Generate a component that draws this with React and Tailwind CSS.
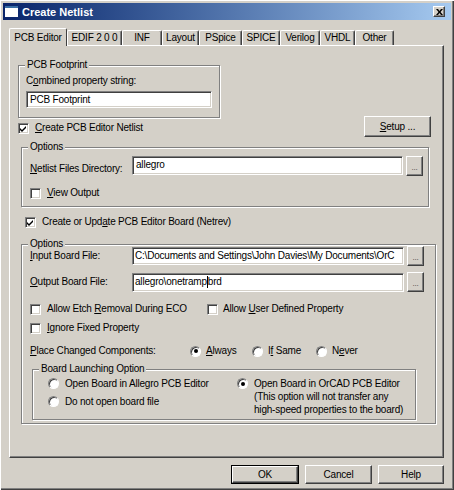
import React from 'react';

const raised =
  'border border-t-white border-l-white border-r-[#404040] border-b-[#404040] shadow-[inset_-1px_-1px_0_#808080] bg-[#d4d0c8]';
const sunken =
  'border border-t-[#808080] border-l-[#808080] border-b-white border-r-white shadow-[inset_1px_1px_0_#404040,inset_-1px_-1px_0_#d4d0c8] bg-white';

const U = ({ children }) => <span className="underline underline-offset-[1px]">{children}</span>;

const Check = ({ checked }) => (
  <span className={`${sunken} w-[11px] h-[11px] shrink-0 flex items-center justify-center`}>
    {checked && (
      <svg width="7" height="7" viewBox="0 0 7 7">
        <path d="M0 3 L2 5 L6 1 L6 3 L2 7 L0 5 Z" fill="#000" />
      </svg>
    )}
  </span>
);

const Radio = ({ checked }) => (
  <span className="w-[11px] h-[11px] shrink-0 rounded-full bg-white border border-t-[#808080] border-l-[#808080] border-b-white border-r-white shadow-[inset_1px_1px_0_#404040] flex items-center justify-center">
    {checked && <span className="w-[4px] h-[4px] rounded-full bg-black" />}
  </span>
);

// etched group box; padding goes on the inner div so the legend stays put
const Group = ({ label, className, inner, children }) => (
  <fieldset className={`border border-[#808080] shadow-[1px_1px_0_#fff,inset_1px_1px_0_#fff] ${className}`}>
    <legend className="ml-[6px] px-[2px] leading-[12px] bg-[#d4d0c8]">{label}</legend>
    <div className={inner}>{children}</div>
  </fieldset>
);

const Browse = () => (
  <div className={`${raised} w-[17px] h-[20px] flex items-end justify-center pb-[3px] text-[8px] leading-[8px] text-[#404040]`}>
    ...
  </div>
);

const tabs = [
  ['EDIF 2 0 0', 'w-[55px]'],
  ['INF', 'w-[40px]'],
  ['Layout', 'w-[37px]'],
  ['PSpice', 'w-[43px]'],
  ['SPICE', 'w-[38px]'],
  ['Verilog', 'w-[40px]'],
  ['VHDL', 'w-[35px]'],
  ['Other', 'w-[39px]'],
];

export default function App() {
  return (
    <div className="w-[454px] h-[490px] bg-[#d4d0c8] text-black text-[10px] leading-[12px] tracking-[-0.2px] font-['Liberation_Sans',Arial,sans-serif] flex flex-col shadow-[inset_1px_1px_0_#fff,inset_-1px_-1px_0_#404040,inset_-2px_-2px_0_#808080] overflow-hidden">
      {/* title bar */}
      <div className="mx-[3px] mt-[3px] h-[17px] bg-gradient-to-r from-[#0a246a] to-[#a6caf0] flex items-center px-[2px]">
        <span className="w-[13px] h-[11px] bg-white border-t-[2px] border-[#3a6ea5] shrink-0" />
        <span className="ml-[4px] text-white font-bold text-[11px] tracking-normal">Create Netlist</span>
        <span className={`${raised} ml-auto mr-[4px] w-[12px] h-[11px] flex items-center justify-center`}>
          <svg width="7" height="6" viewBox="0 0 7 6">
            <path d="M0 0 L2 0 L3.5 2 L5 0 L7 0 L4.5 3 L7 6 L5 6 L3.5 4 L2 6 L0 6 L2.5 3 Z" fill="#000" />
          </svg>
        </span>
      </div>

      {/* tabs */}
      <div className="mt-[8px] ml-[9px] h-[17px] flex items-end relative z-10">
        <div className="w-[58px] h-[18px] -mb-[1px] bg-[#d4d0c8] border-l border-t border-white border-r border-r-[#404040] rounded-t-[2px] flex items-center justify-center">
          PCB Editor
        </div>
        {tabs.map(([t, w]) => (
          <div
            key={t}
            className={`${w} h-[15px] border-l border-t border-white border-r border-r-[#404040] shadow-[inset_-1px_0_0_#808080] rounded-t-[2px] flex items-center justify-center`}
          >
            {t}
          </div>
        ))}
      </div>

      {/* panel */}
      <div className="ml-[9px] w-[435px] h-[413px] border border-t-white border-l-white border-r-[#404040] border-b-[#404040] shadow-[inset_-1px_-1px_0_#808080] flex flex-col">
        <Group label="PCB Footprint" className="mt-[13px] ml-[8px] w-[202px]" inner="pl-[7px] pb-[9px] pt-[4px]">
          <div>
            C<U>o</U>mbined property string:
          </div>
          <div className={`${sunken} mt-[4px] w-[186px] h-[17px] flex items-center pl-[3px]`}>PCB Footprint</div>
        </Group>

        <div className="mt-[-2px] h-[21px] flex items-center justify-between">
          <div className="ml-[8px] flex items-center gap-[6px] mt-[3px]">
            <Check checked />
            <span>
              <U>C</U>reate PCB Editor Netlist
            </span>
          </div>
          <div className={`${raised} mr-[12px] w-[67px] h-[21px] flex items-center justify-center`}>
            <span>
              <U>S</U>etup ...
            </span>
          </div>
        </div>

        <Group label="Options" className="mt-[4px] ml-[11px] w-[408px]" inner="pl-[8px] pb-[7px]">
          <div className="mt-[3px] h-[20px] flex items-center">
            <span className="w-[102px] mt-[6px]">
              <U>N</U>etlist Files Directory:
            </span>
            <div className={`${sunken} w-[271px] h-[19px] self-start flex items-start pl-[3px] pt-[2px]`}>allegro</div>
            <div className="ml-[3px]">
              <Browse />
            </div>
          </div>
          <div className="mt-[11px] flex items-center gap-[6px]">
            <Check />
            <span>
              <U>V</U>iew Output
            </span>
          </div>
        </Group>

        <div className="mt-[9px] ml-[15px] flex items-center gap-[6px]">
          <Check checked />
          <span>
            Create or Upd<U>a</U>te PCB Editor Board (Netrev)
          </span>
        </div>

        <Group label="Options" className="mt-[10px] ml-[11px] w-[415px]" inner="pl-[8px] pb-[3px]">
          <div className="mt-[-4px] h-[20px] flex items-center">
            <span className="w-[102px]">
              <U>I</U>nput Board File:
            </span>
            <div className={`${sunken} w-[272px] h-[18px] flex items-center pl-[2px] overflow-hidden whitespace-nowrap`}>
              C:\Documents and Settings\John Davies\My Documents\OrC
            </div>
            <div className="ml-[3px]">
              <Browse />
            </div>
          </div>
          <div className="mt-[6px] h-[20px] flex items-center">
            <span className="w-[102px]">
              <U>O</U>utput Board File:
            </span>
            <div className={`${sunken} w-[272px] h-[19px] flex items-center pl-[2px] whitespace-nowrap`}>
              allegro\onetramp<span className="inline-block w-[1px] h-[12px] bg-black" />brd
            </div>
            <div className="ml-[3px]">
              <Browse />
            </div>
          </div>
          <div className="mt-[11px] flex items-center">
            <div className="w-[177px] flex items-center gap-[6px]">
              <Check />
              <span>
                Allow Etch <U>R</U>emoval During ECO
              </span>
            </div>
            <div className="flex items-center gap-[5px]">
              <Check />
              <span>
                Allow <U>U</U>ser Defined Property
              </span>
            </div>
          </div>
          <div className="mt-[7px] flex items-center gap-[6px]">
            <Check />
            <span>
              <U>I</U>gnore Fixed Property
            </span>
          </div>
          <div className="mt-[11px] flex items-center">
            <span className="w-[160px]">
              <U>P</U>lace Changed Components:
            </span>
            <div className="w-[62px] flex items-center gap-[5px]">
              <Radio checked />
              <span>
                <U>A</U>lways
              </span>
            </div>
            <div className="w-[64px] flex items-center gap-[5px]">
              <Radio />
              <span>
                I<U>f</U> Same
              </span>
            </div>
            <div className="flex items-center gap-[5px]">
              <Radio />
              <span>
                N<U>e</U>ver
              </span>
            </div>
          </div>
          <Group label="Board Launching Option" className="mt-[6px] ml-[2px] w-[384px]" inner="pl-[15px] pb-[3px] pt-[2px]">
            <div className="flex">
              <div className="w-[189px] flex flex-col">
                <div className="h-[13px] flex items-center gap-[6px]">
                  <Radio />
                  <span>Open Board in Allegro PCB Editor</span>
                </div>
                <div className="mt-[5px] h-[13px] flex items-center gap-[6px]">
                  <Radio />
                  <span>Do not open board file</span>
                </div>
              </div>
              <div className="flex items-start gap-[6px]">
                <div className="mt-[1px]">
                  <Radio checked />
                </div>
                <div className="leading-[13px]">
                  Open Board in OrCAD PCB Editor
                  <br />
                  (This option will not transfer any
                  <br />
                  high-speed properties to the board)
                </div>
              </div>
            </div>
          </Group>
        </Group>
      </div>

      {/* buttons */}
      <div className="mt-[7px] mr-[10px] flex justify-end gap-[6px]">
        <div className="w-[68px] h-[19px] border border-black flex">
          <div className={`${raised} flex-1 flex items-center justify-center`}>OK</div>
        </div>
        <div className={`${raised} w-[67px] h-[19px] flex items-center justify-center`}>Cancel</div>
        <div className={`${raised} w-[66px] h-[19px] flex items-center justify-center`}>Help</div>
      </div>
    </div>
  );
}
